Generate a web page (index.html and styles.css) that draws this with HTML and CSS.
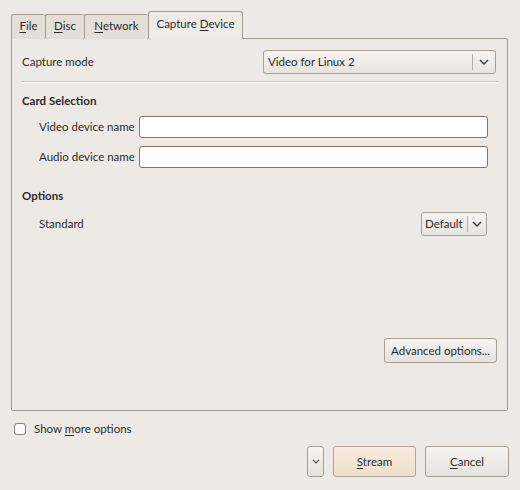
FILE: index.html
```html
<!DOCTYPE html>
<html>
<head>
<meta charset="utf-8">
<link rel="stylesheet" href="styles.css">
</head>
<body>
<div class="dialog">
  <div class="tabs">
    <div class="tab"><span><u>F</u>ile</span></div>
    <div class="tab"><span><u>D</u>isc</span></div>
    <div class="tab"><span><u>N</u>etwork</span></div>
    <div class="tab active"><span>Capture <u>D</u>evice</span></div>
  </div>
  <div class="panel">
    <div class="row mode-row">
      <span class="label">Capture mode</span>
      <div class="combo wide"><span class="combo-text">Video for Linux 2</span><span class="combo-sep"></span><svg class="chev" width="10" height="6" viewBox="0 0 10 6"><path d="M1 1 L5 5 L9 1" fill="none" stroke="#3a3a3a" stroke-width="1.4"/></svg></div>
    </div>
    <div class="sep"></div>
    <div class="heading card-heading">Card Selection</div>
    <div class="fields">
      <span class="label">Video device name</span><div class="entry"></div>
      <span class="label">Audio device name</span><div class="entry"></div>
    </div>
    <div class="heading opt-heading">Options</div>
    <div class="row std-row">
      <span class="label">Standard</span>
      <div class="combo small"><span class="combo-text">Default</span><span class="combo-sep"></span><svg class="chev" width="10" height="6" viewBox="0 0 10 6"><path d="M1 1 L5 5 L9 1" fill="none" stroke="#3a3a3a" stroke-width="1.4"/></svg></div>
    </div>
    <div class="adv-row">
      <div class="btn adv">Advanced options...</div>
    </div>
  </div>
  <div class="check-row">
    <span class="checkbox"></span><span class="label">Show <u>m</u>ore options</span>
  </div>
  <div class="actions">
    <div class="btn drop"><svg width="8" height="5" viewBox="0 0 8 5"><path d="M1 1 L4 4 L7 1" fill="none" stroke="#555" stroke-width="1.1"/></svg></div>
    <div class="btn primary"><span><u>S</u>tream</span></div>
    <div class="btn cancel"><span><u>C</u>ancel</span></div>
  </div>
</div>
</body>
</html>
```
FILE: styles.css
```css
* { box-sizing: border-box; }
html, body { margin: 0; padding: 0; }
body {
  width: 520px;
  height: 490px;
  background: #edeae5;
  font-family: "Lato", "DejaVu Sans", sans-serif;
  font-size: 11.5px;
  line-height: 14px;
  color: #2b2b2b;
  overflow: hidden;
}
u { text-decoration: underline; text-underline-offset: 2px; }
.label { white-space: nowrap; }
.dialog {
  padding: 11px 12px 0 11px;
}
.tabs {
  display: flex;
  align-items: flex-end;
  height: 27px;
  position: relative;
  z-index: 1;
}
.tab {
  height: 25px;
  padding: 0 7px 2px;
  display: flex;
  align-items: center;
  justify-content: center;
  white-space: nowrap;
  background: #e3dfd8;
  border: 1px solid #a59c90;
  border-bottom: none;
  border-right: none;
  border-radius: 2px 2px 0 0;
  margin-bottom: -1px;
}
.tab:nth-child(1) { width: 34px; }
.tab:nth-child(2) { width: 39px; }
.tab:nth-child(3) { width: 64px; }
.tab.active {
  height: 28px;
  width: 95px;
  background: #efece8;
  border-right: 1px solid #a59c90;
  border-radius: 3px 3px 0 0;
  padding-bottom: 4px;
}
.panel {
  height: 373px;
  border: 1px solid #a59c90;
  border-radius: 0 2px 2px 2px;
  padding: 11px 11px 0 10px;
  display: flex;
  flex-direction: column;
}
.row {
  display: flex;
  align-items: center;
  justify-content: space-between;
}
.combo {
  height: 24px;
  border: 1px solid #a8a094;
  border-radius: 3px;
  background: linear-gradient(#f6f4f1, #e8e4de);
  display: flex;
  align-items: center;
  padding-left: 4px;
  white-space: nowrap;
}
.combo.wide { width: 233px; }
.combo.small { width: 66px; height: 24px; padding-left: 3px; }
.combo-text { flex: 1; }
.combo-sep {
  width: 1px;
  height: 16px;
  background: #b5aea4;
}
.chev { margin: 0 6px 0 6px; }
.small .chev { margin: 0 4px 0 4px; }
.small .combo-text { padding-right: 2px; }
.sep {
  height: 2px;
  margin-top: 7px;
  margin-right: -2px;
  border-top: 1px solid #c9c3ba;
  border-bottom: 1px solid #fbfaf8;
}
.heading {
  font-weight: bold;
}
.card-heading { margin-top: 11px; }
.fields {
  display: grid;
  grid-template-columns: 100px 349px;
  row-gap: 8px;
  align-items: center;
  margin-top: 8px;
  padding-left: 17px;
}
.entry {
  height: 22px;
  background: #fff;
  border: 1px solid #7e766b;
  border-radius: 3px;
}
.opt-heading { margin-top: 21px; }
.std-row {
  margin-top: 9px;
  padding-left: 17px;
  padding-right: 9px;
}
.adv-row {
  margin-top: auto;
  margin-bottom: 47px;
  margin-right: -1px;
  display: flex;
  justify-content: flex-end;
}
.btn {
  border: 1px solid #a8a094;
  border-radius: 3px;
  background: linear-gradient(#f6f4f1, #e6e2dc);
  display: flex;
  align-items: center;
  justify-content: center;
  white-space: nowrap;
}
.adv { width: 113px; height: 25px; }
.check-row {
  display: flex;
  align-items: center;
  margin-top: 10px;
  padding-left: 3px;
  height: 16px;
}
.checkbox {
  width: 12px;
  height: 12px;
  border: 1px solid #8e867b;
  border-radius: 3px;
  background: #fbfaf9;
  margin-right: 8px;
}
.actions {
  display: flex;
  justify-content: flex-end;
  gap: 9px;
  margin-top: 9px;
}
.drop { width: 17px; height: 31px; }
.primary {
  width: 83px; height: 31px;
  background: linear-gradient(#f7ebde, #efdfcb);
  border-color: #b0a598;
}
.cancel { width: 84px; height: 31px; margin-right: -1px; }
```
